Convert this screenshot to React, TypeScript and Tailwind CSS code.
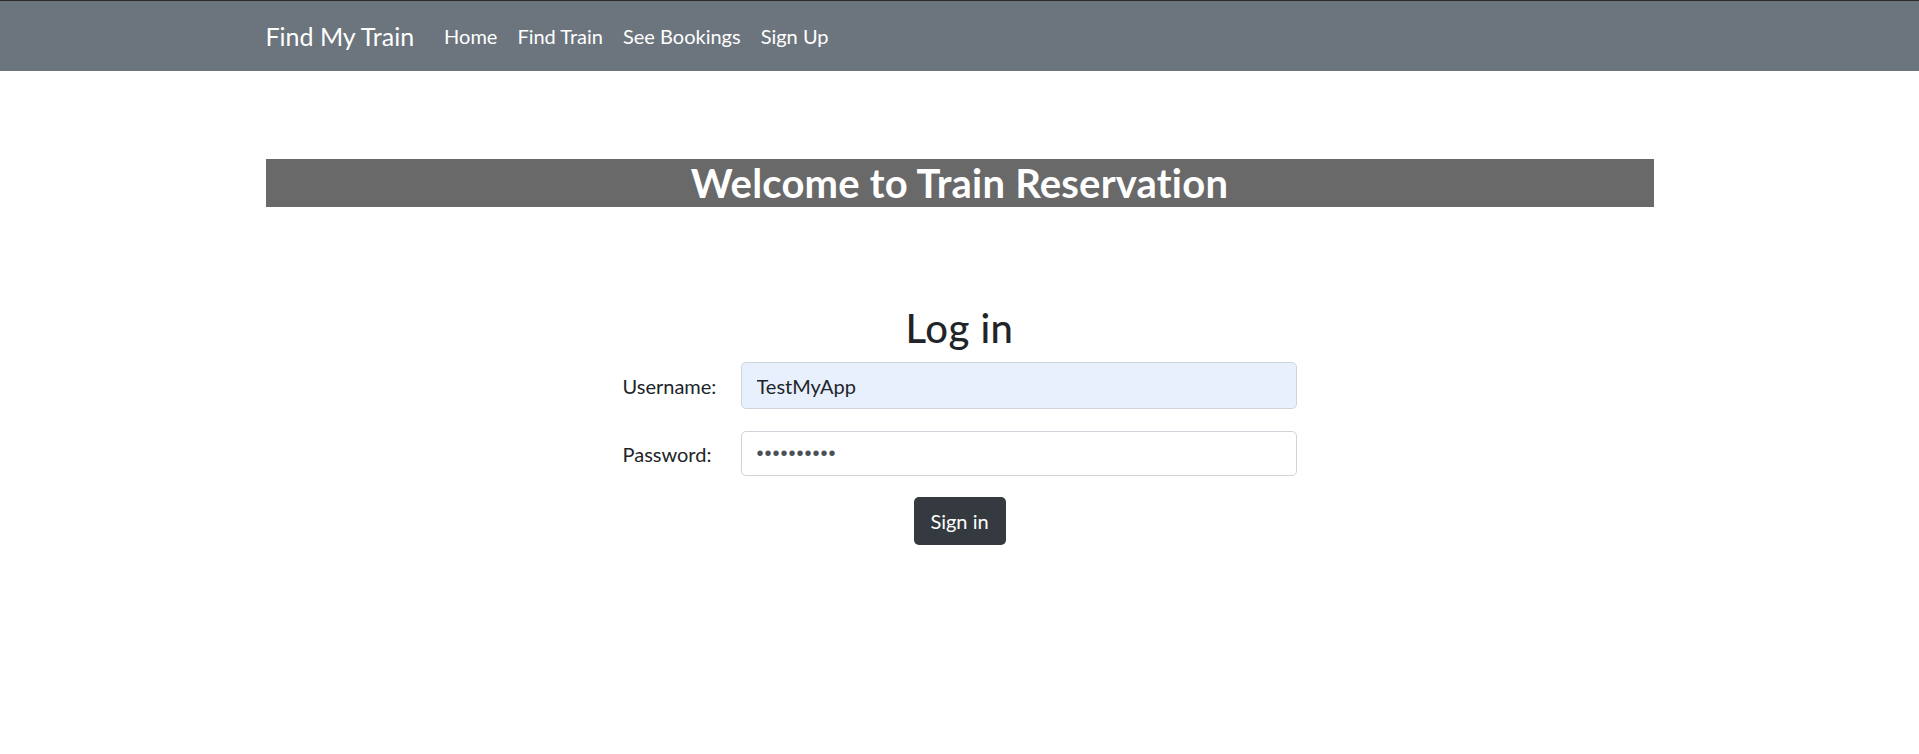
import React from "react";

export default function App() {
  const font = { fontFamily: "Lato, 'Noto Sans', sans-serif" };
  return (
    <div className="min-h-[754px] bg-white text-[#212529]" style={font}>
      <nav className="h-[71px] border-t border-[#2b2b2b] bg-[#6c757d]">
        <div className="mx-auto flex h-full w-[1388px] items-center">
          <span className="mr-[20px] text-[25px] leading-[37px] text-white">Find My Train</span>
          <ul className="flex items-center text-[20px] leading-[30px] text-white">
            <li className="px-[10px]">Home</li>
            <li className="px-[10px]">Find Train</li>
            <li className="px-[10px]">See Bookings</li>
            <li className="px-[10px]">Sign Up</li>
          </ul>
        </div>
      </nav>

      <main className="mx-auto w-[1388px]">
        <h1 className="mt-[88px] h-[48px] bg-[#696969] text-center text-[40px] font-bold leading-[48px] tracking-[0.2px] text-white">
          Welcome to Train Reservation
        </h1>

        <h2 className="mt-[97px] text-center text-[40px] font-medium leading-[48px] tracking-[0.5px] text-[#212529]">Log in</h2>

        <form className="mx-auto mt-[10px] flex w-[674px] flex-col">
          <div className="flex items-center">
            <label className="w-[118px] text-[20px] leading-[30px]">Username:</label>
            <input
              type="text"
              defaultValue="TestMyApp"
              className="h-[47px] w-[556px] rounded-[5px] border border-[#ced4da] bg-[#e8f0fe] px-[15px] text-[20px] text-[#212529] outline-none"
              style={font}
            />
          </div>
          <div className="mt-[22px] flex items-center">
            <label className="w-[118px] text-[20px] leading-[30px]">Password:</label>
            <input
              type="password"
              defaultValue="1234567890"
              className="h-[45px] w-[556px] rounded-[5px] border border-[#ced4da] bg-white px-[15px] text-[20px] tracking-[1px] text-[#495057] outline-none"
              style={{ fontFamily: "'Liberation Sans', Arial, sans-serif" }}
            />
          </div>
          <div className="mt-[21px] flex justify-center">
            <button
              type="button"
              className="h-[48px] w-[92px] rounded-[5px] bg-[#343a40] text-[20px] leading-[30px] text-white"
              style={font}
            >
              Sign in
            </button>
          </div>
        </form>
      </main>
    </div>
  );
}
